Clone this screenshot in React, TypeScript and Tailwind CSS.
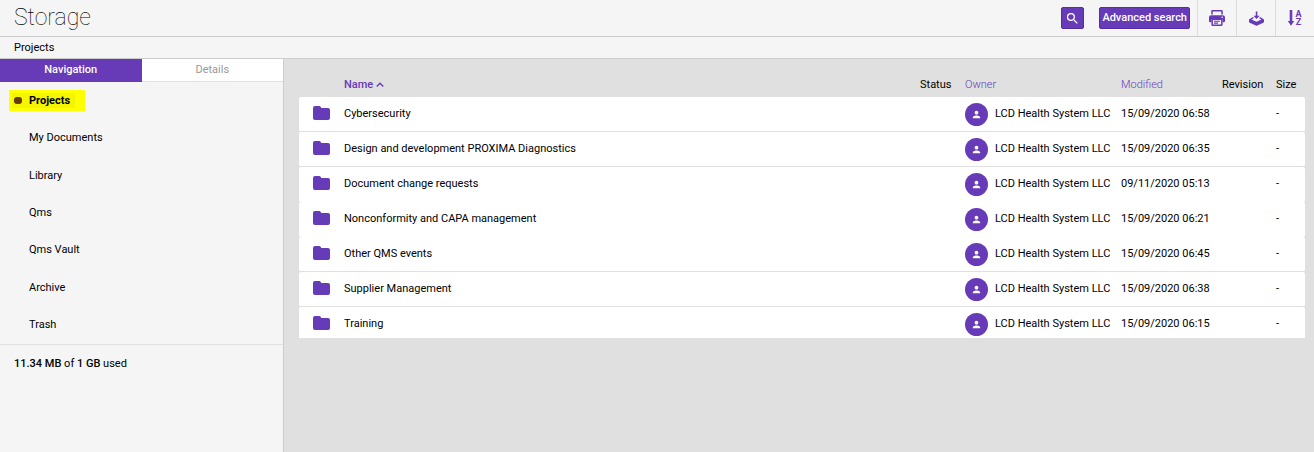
import { ReactNode, useState } from 'react';
import { MdPerson, MdSearch } from 'react-icons/md';

interface FolderRow {
  name: string;
  modified: string;
  divider: boolean;
}

const navItems = ['Projects', 'My Documents', 'Library', 'Qms', 'Qms Vault', 'Archive', 'Trash'];

const OWNER = 'LCD Health System LLC';

const folders: FolderRow[] = [
  { name: 'Cybersecurity', modified: '15/09/2020 06:58', divider: true },
  { name: 'Design and development PROXIMA Diagnostics', modified: '15/09/2020 06:35', divider: true },
  { name: 'Document change requests', modified: '09/11/2020 05:13', divider: false },
  { name: 'Nonconformity and CAPA management', modified: '15/09/2020 06:21', divider: false },
  { name: 'Other QMS events', modified: '15/09/2020 06:45', divider: true },
  { name: 'Supplier Management', modified: '15/09/2020 06:38', divider: true },
  { name: 'Training', modified: '15/09/2020 06:15', divider: false },
];

function FolderIcon() {
  return (
    <svg width="17" height="14" viewBox="0 0 17 14" fill="currentColor" aria-hidden="true">
      <path d="M2 0H6.300Q7.300 0 7.700.9L8.300 2H15Q17 2 17 4V12Q17 14 15 14H2Q0 14 0 12V2Q0 0 2 0Z" />
    </svg>
  );
}

function PrinterIcon() {
  return (
    <svg width="16" height="16" viewBox="0 0 16 16" fill="currentColor" aria-hidden="true">
      <path
        fillRule="evenodd"
        d="M3.500 0h9q1.300 0 1.300 1.300V4.500h-1.500V1.500H3.700v3H2.200V1.300Q2.200 0 3.500 0ZM2.200 5.200h11.600Q16 5.200 16 7.200V11q0 1.200-1.200 1.200h-1.200V9.200H2.400v3H1.200Q0 12.200 0 11V7.200Q0 5.200 2.200 5.200Zm11 1.200a.8.8 0 1 0 0 1.600.8.8 0 0 0 0-1.600Z"
      />
      <path
        fillRule="evenodd"
        d="M2.400 8.800h11.200v5.900q0 1.300-1.300 1.300H3.700q-1.300 0-1.300-1.300ZM3.900 10v4.500h8.200V10ZM5 10.700h6v1.100H5ZM5 12.600h4v1.100H5Z"
      />
    </svg>
  );
}

function ImportIcon() {
  return (
    <svg width="15" height="15" viewBox="0 0 16 15" fill="currentColor" aria-hidden="true">
      <path d="M7.200 0h1.700v4.500h2.500L8 8 4.700 4.500h2.500Z" />
      <path
        fillRule="evenodd"
        d="M4.300 6 5.200 7 2.700 8.600 8 11l5.300-2.400L10.800 7l.9-1 3.600 2q.7.400.7 1.100v1.700q0 .8-.7 1.200L8.700 14.900q-.7.400-1.400 0L.7 12Q0 11.600 0 10.800V9.100Q0 8.400.7 8Z"
      />
    </svg>
  );
}

function SortIcon() {
  return (
    <svg width="14" height="16" viewBox="0 0 14 16" fill="currentColor" aria-hidden="true">
      <path d="M1.700 0h2.600v11H6.200L3 15.700-.2 11h1.900Z" />
      <text x="7.500" y="7" fontSize="9" fontWeight="700">
        A
      </text>
      <text x="7.800" y="15" fontSize="9" fontWeight="700">
        Z
      </text>
    </svg>
  );
}

function ToolButton({ label, children }: { label: string; children: ReactNode }) {
  return (
    <button
      type="button"
      aria-label={label}
      className="flex w-[39px] items-center justify-center border-l border-[#dddddd] text-[#673ab7]"
    >
      {children}
    </button>
  );
}

function Header() {
  return (
    <header>
      <div className="flex h-[37px] border-b border-[#cccccc]">
        <h1 className="flex-1 pl-3.5 text-[23px] leading-9 font-thin">Storage</h1>
        <div className="flex items-center gap-[15px] pr-[7px]">
          <button
            type="button"
            aria-label="Search"
            className="flex h-[22px] w-[23px] items-center justify-center rounded-xs border border-[#512da8] bg-[#673ab7] text-white"
          >
            <MdSearch size={15} />
          </button>
          <button
            type="button"
            className="h-[22px] rounded-xs border border-[#512da8] bg-[#673ab7] px-0.5 font-medium text-white"
          >
            Advanced search
          </button>
        </div>
        <div className="flex">
          <ToolButton label="Print">
            <PrinterIcon />
          </ToolButton>
          <ToolButton label="Import">
            <ImportIcon />
          </ToolButton>
          <ToolButton label="Sort">
            <SortIcon />
          </ToolButton>
        </div>
      </div>
      <nav aria-label="Breadcrumb" className="h-[22px] border-b border-[#cccccc] pl-3.5 leading-[21px]">
        <a href="#projects">Projects</a>
      </nav>
    </header>
  );
}

function Sidebar() {
  const [tab, setTab] = useState('Navigation');

  return (
    <aside className="w-[284px] shrink-0 border-r border-[#cccccc]">
      <div className="flex h-[23px]">
        {['Navigation', 'Details'].map((name) => (
          <button
            key={name}
            type="button"
            onClick={() => setTab(name)}
            className={
              tab === name
                ? 'flex-1 border-b border-[#673ab7] bg-[#673ab7] font-medium text-white'
                : 'flex-1 border-b border-[#e0e0e0] bg-white font-normal text-[#999999]'
            }
          >
            {name}
          </button>
        ))}
      </div>
      <ul className="flex h-[263px] flex-col border-b border-[#e0e0e0]">
        {navItems.map((item, i) => (
          <li key={item} className="flex flex-1 items-center">
            {i === 0 ? (
              <a href="#projects" className="ml-[9px] flex h-[21px] w-[76px] items-center bg-[#ffff00] pl-[3px]">
                <span className="flex h-[15px] w-[63px] items-center bg-[#f5f500] pl-0.5 font-bold">
                  <span className="mr-[7px] h-[7px] w-2 rounded-[3px] bg-[#673a00]" />
                  {item}
                </span>
              </a>
            ) : (
              <a href="#folder" className="pl-[29px]">
                {item}
              </a>
            )}
          </li>
        ))}
      </ul>
      <p className="px-3.5 py-[11px]">
        <b className="font-medium">11.34 MB</b> of <b className="font-medium">1 GB</b> used
      </p>
    </aside>
  );
}

function FolderTable() {
  return (
    <table className="w-full table-fixed border-separate border-spacing-0 text-left">
      <thead>
        <tr className="h-[26px] *:pt-0.5">
          <th className="w-[45px]" />
          <th className="font-medium text-[#673ab7]">
            <button type="button" className="flex items-center gap-[3px]">
              Name
              <svg width="8" height="8" viewBox="0 0 8 8" fill="none" stroke="currentColor" strokeWidth="1.300" aria-hidden="true">
                <path d="M.7 5.500 4 2.200 7.300 5.500" />
              </svg>
            </button>
          </th>
          <th className="w-[45px] font-normal">Status</th>
          <th className="w-[156px] font-light text-[#673ab7]">Owner</th>
          <th className="w-[101px] font-light text-[#673ab7]">Modified</th>
          <th className="w-[54px] font-normal">Revision</th>
          <th className="w-[29px] font-normal">Size</th>
        </tr>
      </thead>
      <tbody>
        {folders.map((row) => (
          <tr
            key={row.name}
            className={
              row.divider
                ? 'h-[35px] *:border-b *:border-[#e0e0e0] *:bg-white'
                : 'h-[35px] *:border-b *:border-white *:bg-white'
            }
          >
            <td className="rounded-l-xs pb-0.5 pl-3.5 text-[#673ab7]">
              <FolderIcon />
            </td>
            <td>{row.name}</td>
            <td />
            <td>
              <div className="flex items-center gap-[7px]">
                <span className="flex size-[23px] items-center justify-center rounded-full bg-[#673ab7] text-white">
                  <MdPerson size={11} />
                </span>
                {OWNER}
              </div>
            </td>
            <td>{row.modified}</td>
            <td />
            <td className="rounded-r-xs">-</td>
          </tr>
        ))}
      </tbody>
    </table>
  );
}

export default function App() {
  return (
    <div className="flex min-h-screen flex-col bg-[#f5f5f5] font-['Roboto',sans-serif] text-[11px] leading-4 text-black">
      <Header />
      <div className="flex flex-1">
        <Sidebar />
        <main className="min-w-0 flex-1 bg-[#e0e0e0] pt-3 pr-[9px] pl-[15px]">
          <div className="max-h-[267px] overflow-hidden">
            <FolderTable />
          </div>
        </main>
      </div>
    </div>
  );
}
